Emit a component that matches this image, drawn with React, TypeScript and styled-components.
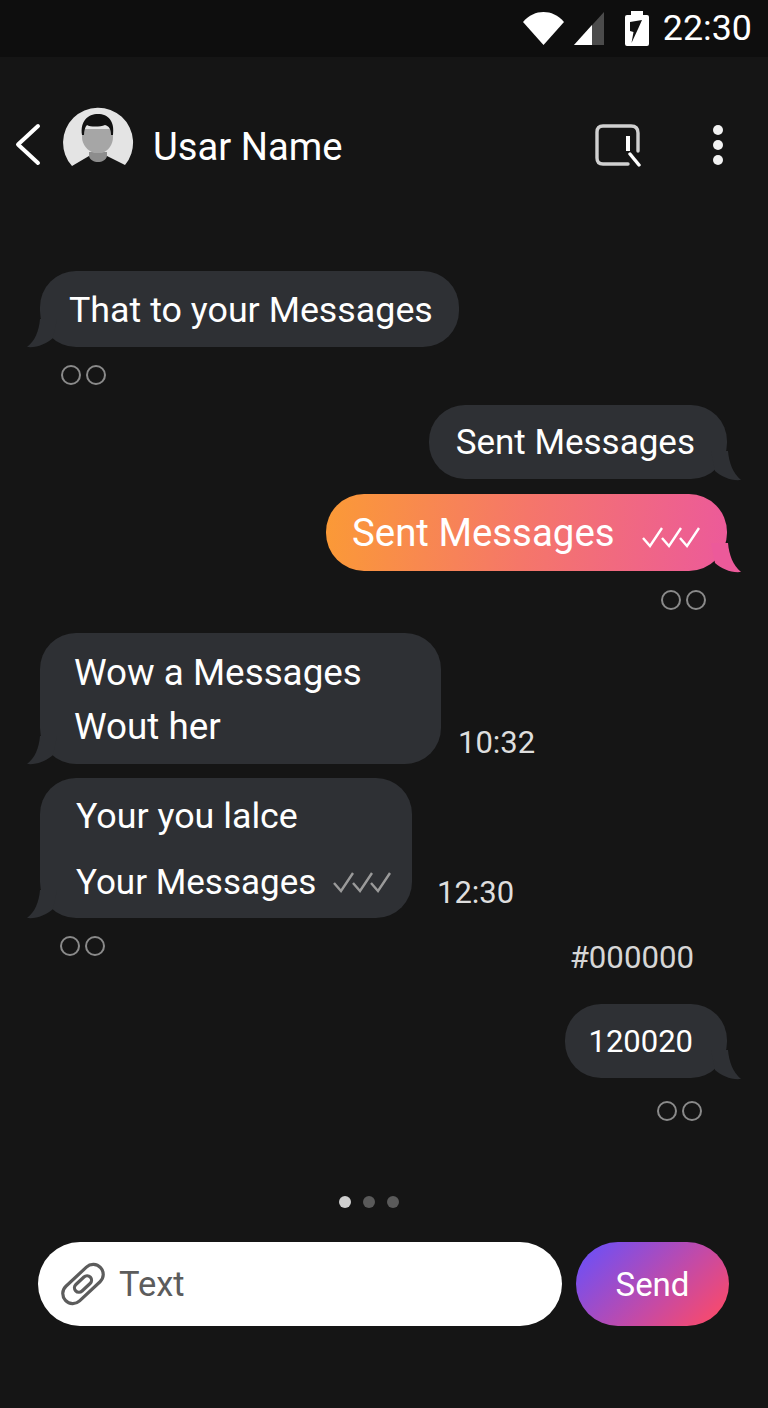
import styled, { createGlobalStyle } from "styled-components";

const GlobalStyle = createGlobalStyle`
  html, body {
    margin: 0;
    padding: 0;
    background: #151515;
  }
  * {
    box-sizing: border-box;
  }
`;

function Tail({ side, color }: { side: "left" | "right"; color: string }) {
  return (
    <TailSvg $side={side} viewBox="0 0 30 30" width="30" height="30">
      {side === "left" ? (
        <path d="M13 0 C12 12 8 22 0 28 C10 29 19 25 26 19 L30 0 Z" fill={color} />
      ) : (
        <path d="M17 0 C18 12 22 22 30 29 C20 30 11 26 4 20 L0 0 Z" fill={color} />
      )}
    </TailSvg>
  );
}

function Receipts() {
  return (
    <Seen>
      <SeenRing />
      <SeenRing />
    </Seen>
  );
}

function Ticks({ color }: { color: string }) {
  return (
    <svg width="58" height="22" viewBox="0 0 58 22" fill="none">
      <path
        d="M1 12 L8 20 L20 2 M20 12 L27 20 L39 2 M38 12 L45 20 L57 2"
        stroke={color}
        strokeWidth="2.4"
      />
    </svg>
  );
}

export default function App() {
  return (
    <>
      <GlobalStyle />
      <Screen>
        <StatusBar>
          <svg width="41" height="33" viewBox="0 0 41 33">
            <path d="M0 10 C6 3 13 0 20.5 0 C28 0 35 3 41 10 L20.5 33 Z" fill="#fff" />
          </svg>
          <SignalIcon width="30" height="33" viewBox="0 0 30 33">
            <path d="M0 33 L30 0 V33 Z" fill="#4b4b4b" />
            <path d="M0 33 L18 13 V33 Z" fill="#fff" />
          </SignalIcon>
          <BatteryIcon width="24" height="35" viewBox="0 0 24 35">
            <path d="M6 0 H18 V4 H22 Q24 4 24 6 V33 Q24 35 22 35 H2 Q0 35 0 33 V6 Q0 4 2 4 H6 Z" fill="#fff" />
            <path d="M5 11 L17 9 L13 18 L6.5 32 L8.5 21 L5 20 Z" fill="#111" />
          </BatteryIcon>
          <Clock>22:30</Clock>
        </StatusBar>

        <Header>
          <svg width="28" height="44" viewBox="0 0 28 44" fill="none">
            <path d="M24 3 L4 21.5 L24 40" stroke="#fff" strokeWidth="4" strokeLinecap="round" strokeLinejoin="round" />
          </svg>
          <Avatar width="72" height="62" viewBox="0 0 72 62">
            <path d="M10 59 A35 35 0 1 1 63 58 L45 49 L27 49 Z" fill="#e4e4e4" />
            <path d="M27 45 H45 V49 C44 53 40 55 36 55 C32 55 28 53 27 49 Z" fill="#8d8d8d" />
            <path d="M20 22 H51 V30 C51 38 46 44 40 46 H32 C26 44 20 38 20 30 Z" fill="#a6a6a6" />
            <path d="M20 28 C18 14 26 7 36 7 C46 7 53 14 51 28 L49 28 C49 22 47 19 43 18 C38 20 28 20 25 18 C23 20 22 24 22 28 Z" fill="#111" />
          </Avatar>
          <ContactName>Usar Name</ContactName>
          <Spacer />
          <ChatIcon width="48" height="44" viewBox="0 0 48 44" fill="none">
            <path d="M44 28 V10 Q44 3 37 3 H9 Q3 3 3 9 V35 Q3 41 9 41 H34" stroke="#d0d0d0" strokeWidth="3.4" strokeLinecap="round" />
            <path d="M34 13 V28" stroke="#fff" strokeWidth="4" />
            <path d="M36 31 L45 42" stroke="#fff" strokeWidth="3.4" strokeLinecap="round" />
          </ChatIcon>
          <Kebab>
            <KebabDot />
            <KebabDot />
            <KebabDot />
          </Kebab>
        </Header>

        <Thread>
          <Row $top={0}>
            <Bubble $height={76} $size={35.8} $pad="2px 26px 0 29px">
              That to your Messages
              <Tail side="left" color="#2e3034" />
            </Bubble>
          </Row>
          <SeenRow $top={18} $indent={21}>
            <Receipts />
          </SeenRow>

          <Row $top={20} $mine>
            <Bubble $height={74} $size={35} $pad="0 32px 0 27px">
              Sent Messages
              <Tail side="right" color="#2e3034" />
            </Bubble>
          </Row>
          <Row $top={15} $mine>
            <GradientBubble>
              Sent Messages
              <TickSlot>
                <Ticks color="#fff" />
              </TickSlot>
              <Tail side="right" color="#ec5a9a" />
            </GradientBubble>
          </Row>
          <SeenRow $top={19} $mine $indent={21}>
            <Receipts />
          </SeenRow>

          <Row $top={23}>
            <TallBubble $width={401} $height={131} $gap={11} $size={36.8} $left={34}>
              <span>Wow a Messages</span>
              <span>Wout her</span>
              <Tail side="left" color="#2e3034" />
            </TallBubble>
            <Timestamp $offset={17} $lift={3}>10:32</Timestamp>
          </Row>
          <Row $top={14}>
            <TallBubble $width={372} $height={140} $gap={23} $size={35.8} $left={36}>
              <span>Your you lalce</span>
              <TextWithTicks>
                Your Messages
                <Ticks color="#9a9a9a" />
              </TextWithTicks>
              <Tail side="left" color="#2e3034" />
            </TallBubble>
            <Timestamp $offset={25} $lift={7}>12:30</Timestamp>
          </Row>
          <NoteRow>
            <SeenSlot>
              <Receipts />
            </SeenSlot>
            <HexNote>#000000</HexNote>
          </NoteRow>
          <Row $top={26} $mine>
            <Bubble $height={74} $size={31} $pad="0 34px 0 23px">
              120020
              <Tail side="right" color="#2e3034" />
            </Bubble>
          </Row>
          <SeenRow $top={23} $mine $indent={25}>
            <Receipts />
          </SeenRow>
        </Thread>

        <Pager>
          <PagerDot $active />
          <PagerDot />
          <PagerDot />
        </Pager>

        <Composer>
          <InputPill>
            <svg width="46" height="46" viewBox="0 0 46 46" fill="none" stroke="#5c5c5c" strokeWidth="3.2">
              <rect x="-1" y="13" width="48" height="20" rx="10" transform="rotate(-43 23 23)" />
              <rect x="13" y="18.5" width="20" height="9" rx="4.5" transform="rotate(-43 23 23)" />
            </svg>
            <Placeholder>Text</Placeholder>
          </InputPill>
          <SendButton>Send</SendButton>
        </Composer>
      </Screen>
    </>
  );
}

const Screen = styled.div`
  width: 768px;
  height: 1408px;
  overflow: hidden;
  display: flex;
  flex-direction: column;
  background: #151515;
  color: #fff;
  font-family: Roboto, "Liberation Sans", sans-serif;
`;

const StatusBar = styled.div`
  height: 57px;
  flex: none;
  display: flex;
  align-items: center;
  justify-content: flex-end;
  padding-right: 16px;
  background: #0e0e0e;
`;

const SignalIcon = styled.svg`
  margin-left: 10px;
`;

const BatteryIcon = styled.svg`
  margin-left: 21px;
`;

const Clock = styled.span`
  margin-left: 14px;
  font-size: 35.8px;
  line-height: 57px;
`;

const Header = styled.div`
  height: 176px;
  flex: none;
  display: flex;
  align-items: center;
  padding: 0 45px 0 14px;
`;

const Avatar = styled.svg`
  margin-left: 20px;
  margin-bottom: 14px;
`;

const ContactName = styled.span`
  margin: 4px 0 0 19px;
  font-size: 38.2px;
  line-height: 44px;
`;

const Spacer = styled.div`
  flex: 1;
`;

const ChatIcon = styled.svg`
  margin-right: 71px;
`;

const Kebab = styled.div`
  display: flex;
  flex-direction: column;
  gap: 5px;
`;

const KebabDot = styled.span`
  width: 10px;
  height: 10px;
  border-radius: 50%;
  background: #f2f2f2;
`;

const Thread = styled.div`
  flex: 1;
  min-height: 0;
  padding: 38px 41px 0 40px;
  display: flex;
  flex-direction: column;
`;

const Row = styled.div<{ $top: number; $mine?: boolean }>`
  margin-top: ${(p) => p.$top}px;
  display: flex;
  align-items: flex-start;
  justify-content: ${(p) => (p.$mine ? "flex-end" : "flex-start")};
`;

const SeenRow = styled.div<{ $top: number; $mine?: boolean; $indent: number }>`
  margin-top: ${(p) => p.$top}px;
  display: flex;
  justify-content: ${(p) => (p.$mine ? "flex-end" : "flex-start")};
  padding: 0 ${(p) => p.$indent}px;
`;

const NoteRow = styled.div`
  margin-top: 18px;
  display: flex;
  align-items: flex-start;
  justify-content: space-between;
  padding: 0 33px 0 20px;
`;

const SeenSlot = styled.div`
  display: flex;
`;

const Seen = styled.div`
  display: flex;
  gap: 5px;
`;

const SeenRing = styled.span`
  width: 20px;
  height: 20px;
  border: 2.8px solid #8a8a8a;
  border-radius: 50%;
`;

const Bubble = styled.div<{ $height: number; $pad: string; $size: number }>`
  position: relative;
  height: ${(p) => p.$height}px;
  padding: ${(p) => p.$pad};
  display: flex;
  align-items: center;
  border-radius: 36px;
  background: #2e3034;
  font-size: ${(p) => p.$size}px;
  white-space: nowrap;
`;

const GradientBubble = styled.div`
  position: relative;
  width: 401px;
  height: 77px;
  padding: 0 27px 0 26px;
  display: flex;
  align-items: center;
  border-radius: 38px;
  background: linear-gradient(95deg, #fb9a36 0%, #f5766a 50%, #ec5a9a 100%);
  font-size: 38.4px;
  white-space: nowrap;
`;

const TickSlot = styled.span`
  margin-left: auto;
  display: flex;
  padding-top: 8px;
`;

const TallBubble = styled.div<{
  $width: number;
  $height: number;
  $gap: number;
  $size: number;
  $left: number;
}>`
  position: relative;
  width: ${(p) => p.$width}px;
  height: ${(p) => p.$height}px;
  padding: 2px 20px 0 ${(p) => p.$left}px;
  display: flex;
  flex-direction: column;
  justify-content: center;
  gap: ${(p) => p.$gap}px;
  border-radius: 36px;
  background: #2e3034;
  font-size: ${(p) => p.$size}px;
  line-height: 43px;
  white-space: nowrap;
`;

const TextWithTicks = styled.span`
  display: flex;
  align-items: center;
  gap: 17px;
  font-size: 35px;
`;

const TailSvg = styled.svg<{ $side: "left" | "right" }>`
  position: absolute;
  bottom: -2px;
  ${(p) => (p.$side === "left" ? "left: -13px;" : "right: -14px;")}
`;

const Timestamp = styled.span<{ $offset: number; $lift: number }>`
  align-self: flex-end;
  margin-left: ${(p) => p.$offset}px;
  margin-bottom: ${(p) => p.$lift}px;
  font-size: 31px;
  line-height: 36px;
  color: #dedede;
`;

const HexNote = styled.span`
  margin-top: 2px;
  font-size: 31.2px;
  line-height: 40px;
  color: #d6d6d6;
`;

const Pager = styled.div`
  display: flex;
  justify-content: center;
  gap: 12px;
  margin-bottom: 34px;
  padding-right: 30px;
`;

const PagerDot = styled.span<{ $active?: boolean }>`
  width: 12px;
  height: 12px;
  border-radius: 50%;
  background: ${(p) => (p.$active ? "#cfcfcf" : "#5a5a5a")};
`;

const Composer = styled.div`
  flex: none;
  display: flex;
  gap: 14px;
  padding: 0 39px 82px 38px;
`;

const InputPill = styled.div`
  flex: 1;
  height: 84px;
  display: flex;
  align-items: center;
  gap: 13px;
  padding-left: 22px;
  border-radius: 42px;
  background: #fff;
`;

const Placeholder = styled.span`
  font-size: 34.5px;
  color: #5c5c5c;
`;

const SendButton = styled.button`
  width: 153px;
  height: 84px;
  padding: 0;
  border: 0;
  border-radius: 42px;
  background: linear-gradient(135deg, #744ff0 10%, #c44aa6 58%, #f84a6c 92%);
  color: #fff;
  font-family: inherit;
  font-size: 33px;
`;
